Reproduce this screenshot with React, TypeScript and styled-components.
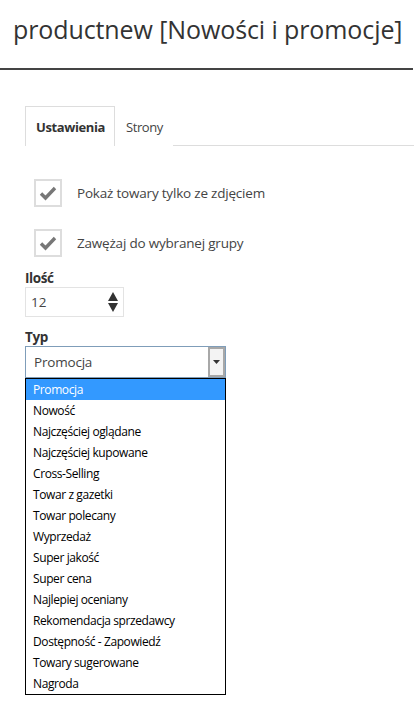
import styled, { createGlobalStyle } from 'styled-components';

const GlobalStyle = createGlobalStyle`
  body {
    margin: 0;
    background: #fff;
    font-family: 'Open Sans', 'Noto Sans', sans-serif;
    color: #333;
  }
`;

const options = [
  'Promocja',
  'Nowość',
  'Najczęściej oglądane',
  'Najczęściej kupowane',
  'Cross-Selling',
  'Towar z gazetki',
  'Towar polecany',
  'Wyprzedaż',
  'Super jakość',
  'Super cena',
  'Najlepiej oceniany',
  'Rekomendacja sprzedawcy',
  'Dostępność - Zapowiedź',
  'Towary sugerowane',
  'Nagroda',
];

const Check = () => (
  <svg width='18' height='16' viewBox='0 0 18 16'>
    <path d='M2 8.5 L6.5 13 L16 3' fill='none' stroke='#777' strokeWidth='3.4' strokeLinejoin='miter' />
  </svg>
);

const App = () => {
  return (
    <Page>
      <GlobalStyle />
      <Header>
        <Title>productnew [Nowości i promocje]</Title>
      </Header>
      <Content>
        <TabList>
          <Tab active>Ustawienia</Tab>
          <Tab>Strony</Tab>
        </TabList>

        <CheckList>
          <CheckRow>
            <CheckBox>
              <Check />
            </CheckBox>
            <span>Pokaż towary tylko ze zdjęciem</span>
          </CheckRow>
          <CheckRow>
            <CheckBox>
              <Check />
            </CheckBox>
            <span>Zawężaj do wybranej grupy</span>
          </CheckRow>
        </CheckList>

        <Field gap={13}>
          <Label>Ilość</Label>
          <NumberBox>
            <span>12</span>
            <svg width='10' height='20' viewBox='0 0 10 20'>
              <path d='M5 0 L10 9 L0 9 Z M0 11 L10 11 L5 20 Z' fill='#333' />
            </svg>
          </NumberBox>
        </Field>

        <Field gap={12}>
          <Label>Typ</Label>
          <SelectBox>
            <span>Promocja</span>
            <SelectButton>
              <svg width='7' height='4' viewBox='0 0 7 4'>
                <path d='M0 0 L7 0 L3.5 4 Z' fill='#333' />
              </svg>
            </SelectButton>
          </SelectBox>
          <OptionList>
            {options.map((o, i) => (
              <OptionItem key={o} selected={i === 0}>
                {o}
              </OptionItem>
            ))}
          </OptionList>
        </Field>
      </Content>
    </Page>
  );
};

const Page = styled.div`
  width: 414px;
  height: 716px;
  overflow: hidden;
`;

const Header = styled.header`
  height: 70px;
  padding: 0 13px;
  border-bottom: 2px solid #444;
  box-sizing: border-box;
  width: 413px;
`;

const Title = styled.h1`
  margin: 0;
  padding-top: 9px;
  font-size: 25px;
  font-weight: 400;
  line-height: 40px;
  color: #333;
  letter-spacing: -0.1px;
  white-space: nowrap;
`;

const Content = styled.div`
  padding: 36px 0 0 25px;
`;

const TabList = styled.div`
  display: flex;
  height: 40px;
  border-bottom: 1px solid #ddd;
  box-sizing: border-box;
`;

const Tab = styled.div<{ active?: boolean }>`
  display: flex;
  align-items: center;
  padding: 0 9px 0 10px;
  height: 40px;
  box-sizing: border-box;
  font-size: 13px;
  font-weight: ${(p) => (p.active ? 700 : 400)};
  color: ${(p) => (p.active ? '#333' : '#444')};
  letter-spacing: -0.4px;
  border: 1px solid ${(p) => (p.active ? '#ddd' : 'transparent')};
  border-bottom: none;
  background: #fff;
  ${(p) => p.active && 'margin-bottom: -1px;'}
`;

const CheckList = styled.div`
  display: flex;
  flex-direction: column;
  gap: 22px;
  padding: 33px 0 0 9px;
`;

const CheckRow = styled.label`
  display: flex;
  align-items: center;
  gap: 15px;
  font-size: 13.5px;
  color: #444;
  letter-spacing: -0.2px;
`;

const CheckBox = styled.span`
  width: 28px;
  height: 28px;
  box-sizing: border-box;
  border: 2px solid #ddd;
  display: flex;
  align-items: center;
  justify-content: center;
`;

const Field = styled.div<{ gap: number }>`
  display: flex;
  flex-direction: column;
  align-items: flex-start;
  margin-top: ${(p) => p.gap}px;
`;

const Label = styled.div`
  font-size: 13.5px;
  font-weight: 700;
  color: #333;
  line-height: 17px;
  letter-spacing: -0.4px;
`;

const NumberBox = styled.div`
  width: 99px;
  height: 30px;
  box-sizing: border-box;
  border: 1px solid #e3e3e3;
  display: flex;
  align-items: center;
  justify-content: space-between;
  padding: 0 5px 0 5px;
  font-size: 13.5px;
  color: #444;
`;

const SelectBox = styled.div`
  width: 201px;
  height: 32px;
  box-sizing: border-box;
  border: 1px solid #7f9db9;
  display: flex;
  align-items: center;
  justify-content: space-between;
  padding-left: 8px;
  font-size: 13.5px;
  letter-spacing: -0.2px;
  color: #444;
`;

const SelectButton = styled.div`
  width: 17px;
  height: 30px;
  box-sizing: border-box;
  border: 2px solid #a8a8a8;
  background: #f3f3f3;
  display: flex;
  align-items: center;
  justify-content: center;
`;

const OptionList = styled.div`
  width: 201px;
  box-sizing: border-box;
  border: 1px solid #000;
  display: flex;
  flex-direction: column;
`;

const OptionItem = styled.div<{ selected?: boolean }>`
  height: 21px;
  line-height: 21px;
  padding-left: 7px;
  font-size: 12px;
  color: ${(p) => (p.selected ? '#fff' : '#000')};
  background: ${(p) => (p.selected ? '#3399ff' : '#fff')};
  letter-spacing: -0.4px;
`;

export default App;
